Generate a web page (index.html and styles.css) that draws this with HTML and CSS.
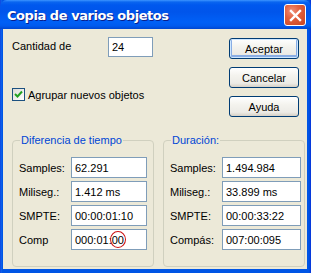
FILE: index.html
```html
<!DOCTYPE html>
<html>
<head>
<meta charset="utf-8">
<link rel="stylesheet" href="styles.css">
</head>
<body>
<div class="window">
  <div class="titlebar">
    <span class="title">Copia de varios objetos</span>
    <span class="close">
      <svg width="13" height="13" viewBox="0 0 13 13"><path d="M2 2 L11 11 M11 2 L2 11" stroke="#fff" stroke-width="2.4" stroke-linecap="square"/></svg>
    </span>
  </div>
  <div class="client">
    <div class="top">
      <div class="left">
        <div class="qty">
          <span class="qty-label">Cantidad de</span>
          <span class="field qty-field">24</span>
        </div>
        <label class="check">
          <span class="box">
            <svg width="9" height="9" viewBox="0 0 9 9"><path d="M1 4 L3.5 6.5 L8 1.5" fill="none" stroke="#21A121" stroke-width="2"/></svg>
          </span>
          <span>Agrupar nuevos objetos</span>
        </label>
      </div>
      <div class="buttons">
        <span class="btn default">Aceptar</span>
        <span class="btn">Cancelar</span>
        <span class="btn">Ayuda</span>
      </div>
    </div>
    <div class="groups">
      <fieldset class="group">
        <legend>Diferencia de tiempo</legend>
        <div class="row"><span class="lbl">Samples:</span><span class="field gf">62.291</span></div>
        <div class="row"><span class="lbl">Miliseg.:</span><span class="field gf">1.412 ms</span></div>
        <div class="row"><span class="lbl">SMPTE:</span><span class="field gf">00:00:01:10</span></div>
        <div class="row"><span class="lbl">Comp</span><span class="field gf">000:01:<span class="mark">00</span></span></div>
      </fieldset>
      <fieldset class="group right">
        <legend>Duración:</legend>
        <div class="row"><span class="lbl">Samples:</span><span class="field gf">1.494.984</span></div>
        <div class="row"><span class="lbl">Miliseg.:</span><span class="field gf">33.899 ms</span></div>
        <div class="row"><span class="lbl">SMPTE:</span><span class="field gf">00:00:33:22</span></div>
        <div class="row"><span class="lbl">Compás:</span><span class="field gf">007:00:095</span></div>
      </fieldset>
    </div>
  </div>
</div>
</body>
</html>
```
FILE: styles.css
```css
html, body {
  margin: 0;
  padding: 0;
  width: 311px;
  height: 273px;
  overflow: hidden;
  background: #ECE9D8;
}
.window {
  width: 311px;
  height: 273px;
  box-sizing: border-box;
  background: linear-gradient(to right, #0831D9 0, #166AEE 1px, #0055E5 2px, #0055E5 calc(100% - 2px), #0831D9 100%);
  padding: 0 4px 4px 3px;
  display: flex;
  flex-direction: column;
  font-family: "Liberation Sans", Arial, sans-serif;
  font-size: 11px;
  color: #000;
}
.titlebar {
  height: 29px;
  margin: 0 -4px 0 -3px;
  border-radius: 7px 7px 0 0;
  background: linear-gradient(to bottom, #3D95FF 0px, #0A66F0 2px, #0058EE 5px, #0055EB 12px, #0060F6 22px, #005AEE 26px, #0046CF 29px);
  display: flex;
  align-items: center;
  justify-content: space-between;
  padding: 0 5px 0 7px;
}
.title {
  color: #fff;
  font-family: "DejaVu Sans", "Liberation Sans", sans-serif;
  font-weight: bold;
  font-size: 13px;
  letter-spacing: -0.45px;
  text-shadow: 1px 1px 0 #0A1F8C;
  margin-top: 1px;
}
.close {
  width: 20px;
  height: 20px;
  border: 1px solid #fff;
  border-radius: 3px;
  background: radial-gradient(circle at 35% 30%, #F0907A 0, #E2603E 40%, #C8431F 100%);
  display: flex;
  align-items: center;
  justify-content: center;
  margin-top: 1px;
}
.client {
  flex: 1;
  background: #ECE9D8;
  padding: 8px 0 0 9px;
  display: flex;
  flex-direction: column;
}
.top {
  display: flex;
  height: 97px;
}
.left {
  width: 217px;
  display: flex;
  flex-direction: column;
}
.qty {
  display: flex;
  align-items: flex-start;
}
.qty-label {
  width: 96px;
  margin-top: 3px;
}
.field {
  background: #fff;
  border: 1px solid #7F9DB9;
  box-sizing: border-box;
  display: flex;
  align-items: center;
  padding-left: 3px;
  white-space: nowrap;
}
.qty-field {
  width: 45px;
  height: 20px;
}
.check {
  display: flex;
  align-items: center;
  margin-top: 31px;
  gap: 3px;
}
.check span:last-child {
  margin-top: 1px;
}
.box {
  width: 13px;
  height: 13px;
  box-sizing: border-box;
  border: 1px solid #1C5180;
  background: linear-gradient(135deg, #DCDCD7, #FFFFFF);
  display: flex;
  align-items: center;
  justify-content: center;
}
.buttons {
  display: flex;
  flex-direction: column;
  gap: 8px;
  margin-top: 1px;
}
.btn {
  width: 70px;
  height: 21px;
  box-sizing: border-box;
  border: 1px solid #003C74;
  border-radius: 3px;
  background: linear-gradient(to bottom, #FFFFFF 0, #F4F3EE 40%, #ECEBE6 80%, #D6D0C5 100%);
  display: flex;
  align-items: center;
  justify-content: center;
}
.btn.default {
  box-shadow: inset 0 0 0 1px #CEE7FF, inset 0 -1px 0 2px #89ADE4;
}
.groups {
  display: flex;
  gap: 9px;
}
fieldset.group {
  margin: 0;
  width: 142px;
  height: 133px;
  box-sizing: border-box;
  border: 1px solid #D0D0BF;
  border-radius: 4px;
  padding: 10px 0 0 6px;
  display: flex;
  flex-direction: column;
  gap: 3px;
}
legend {
  color: #0046D5;
  padding: 0 1px;
  margin-left: 1px;
  line-height: 13px;
}
.row {
  display: flex;
  align-items: center;
}
.lbl {
  width: 52px;
}
.gf {
  width: 76px;
  height: 21px;
}
.right .gf {
  width: 79px;
}
.mark {
  position: relative;
}
.mark::after {
  content: "";
  position: absolute;
  left: -2px;
  top: -3px;
  width: 14px;
  height: 15px;
  border: 1px solid #CC1010;
  border-radius: 50%;
}
```
